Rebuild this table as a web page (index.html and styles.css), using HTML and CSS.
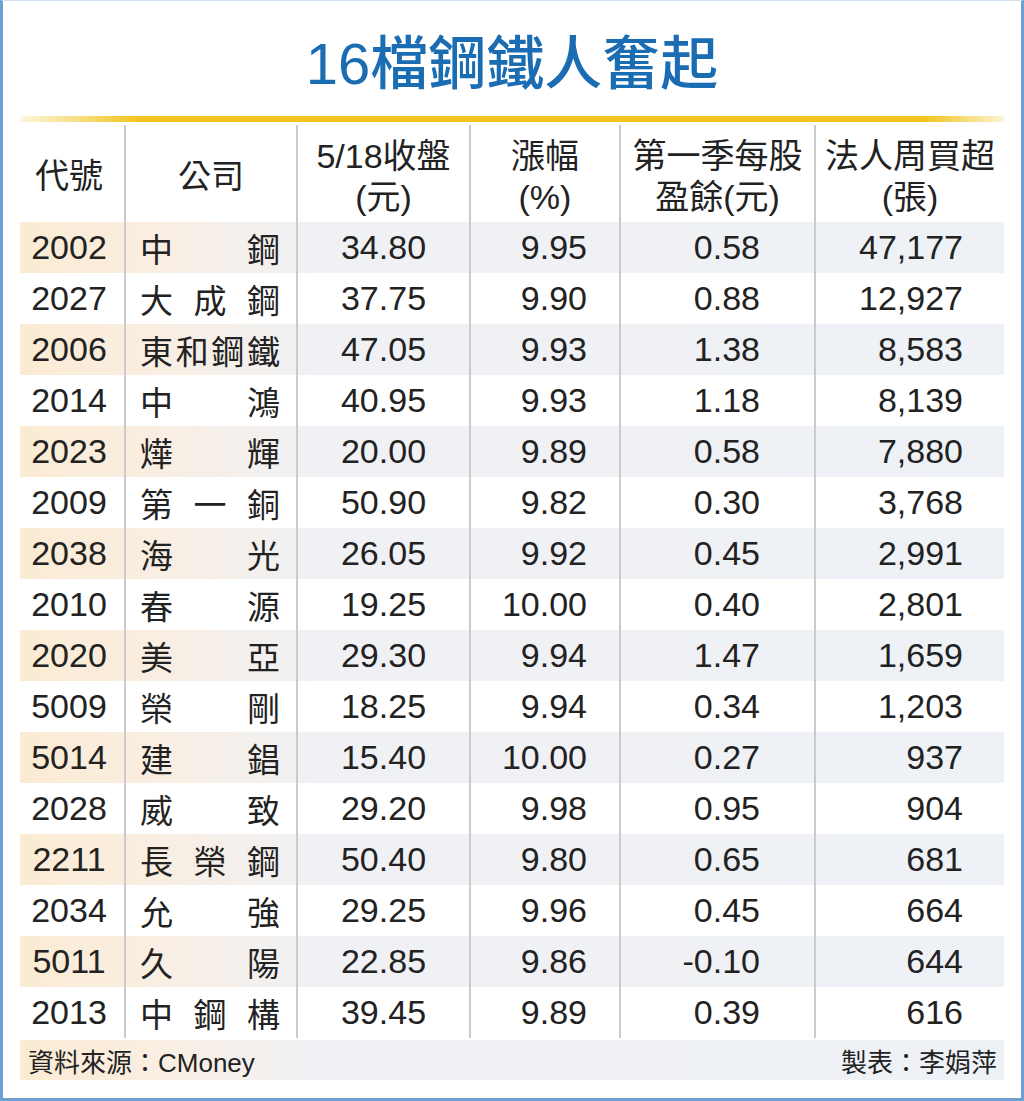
FILE: index.html
```html
<!DOCTYPE html>
<html lang="zh-Hant">
<head>
<meta charset="utf-8">
<title>16檔鋼鐵人奮起</title>
<link rel="stylesheet" href="styles.css">
</head>
<body>
<div class="frame">
  <h1 class="title">16檔鋼鐵人奮起</h1>
  <div class="rule"></div>
  <div class="table">
    <div class="row head">
      <div class="c c1">代號</div>
      <div class="c c2">公司</div>
      <div class="c c3">5/18收盤<br>(元)</div>
      <div class="c c4">漲幅<br>(%)</div>
      <div class="c c5">第一季每股<br>盈餘(元)</div>
      <div class="c c6">法人周買超<br>(張)</div>
    </div>
    <div class="row alt"><div class="c c1">2002</div><div class="c c2"><span>中</span><span>鋼</span></div><div class="c c3">34.80</div><div class="c c4">9.95</div><div class="c c5">0.58</div><div class="c c6">47,177</div></div>
    <div class="row"><div class="c c1">2027</div><div class="c c2"><span>大</span><span>成</span><span>鋼</span></div><div class="c c3">37.75</div><div class="c c4">9.90</div><div class="c c5">0.88</div><div class="c c6">12,927</div></div>
    <div class="row alt"><div class="c c1">2006</div><div class="c c2"><span>東</span><span>和</span><span>鋼</span><span>鐵</span></div><div class="c c3">47.05</div><div class="c c4">9.93</div><div class="c c5">1.38</div><div class="c c6">8,583</div></div>
    <div class="row"><div class="c c1">2014</div><div class="c c2"><span>中</span><span>鴻</span></div><div class="c c3">40.95</div><div class="c c4">9.93</div><div class="c c5">1.18</div><div class="c c6">8,139</div></div>
    <div class="row alt"><div class="c c1">2023</div><div class="c c2"><span>燁</span><span>輝</span></div><div class="c c3">20.00</div><div class="c c4">9.89</div><div class="c c5">0.58</div><div class="c c6">7,880</div></div>
    <div class="row"><div class="c c1">2009</div><div class="c c2"><span>第</span><span>一</span><span>銅</span></div><div class="c c3">50.90</div><div class="c c4">9.82</div><div class="c c5">0.30</div><div class="c c6">3,768</div></div>
    <div class="row alt"><div class="c c1">2038</div><div class="c c2"><span>海</span><span>光</span></div><div class="c c3">26.05</div><div class="c c4">9.92</div><div class="c c5">0.45</div><div class="c c6">2,991</div></div>
    <div class="row"><div class="c c1">2010</div><div class="c c2"><span>春</span><span>源</span></div><div class="c c3">19.25</div><div class="c c4">10.00</div><div class="c c5">0.40</div><div class="c c6">2,801</div></div>
    <div class="row alt"><div class="c c1">2020</div><div class="c c2"><span>美</span><span>亞</span></div><div class="c c3">29.30</div><div class="c c4">9.94</div><div class="c c5">1.47</div><div class="c c6">1,659</div></div>
    <div class="row"><div class="c c1">5009</div><div class="c c2"><span>榮</span><span>剛</span></div><div class="c c3">18.25</div><div class="c c4">9.94</div><div class="c c5">0.34</div><div class="c c6">1,203</div></div>
    <div class="row alt"><div class="c c1">5014</div><div class="c c2"><span>建</span><span>錩</span></div><div class="c c3">15.40</div><div class="c c4">10.00</div><div class="c c5">0.27</div><div class="c c6">937</div></div>
    <div class="row"><div class="c c1">2028</div><div class="c c2"><span>威</span><span>致</span></div><div class="c c3">29.20</div><div class="c c4">9.98</div><div class="c c5">0.95</div><div class="c c6">904</div></div>
    <div class="row alt"><div class="c c1">2211</div><div class="c c2"><span>長</span><span>榮</span><span>鋼</span></div><div class="c c3">50.40</div><div class="c c4">9.80</div><div class="c c5">0.65</div><div class="c c6">681</div></div>
    <div class="row"><div class="c c1">2034</div><div class="c c2"><span>允</span><span>強</span></div><div class="c c3">29.25</div><div class="c c4">9.96</div><div class="c c5">0.45</div><div class="c c6">664</div></div>
    <div class="row alt"><div class="c c1">5011</div><div class="c c2"><span>久</span><span>陽</span></div><div class="c c3">22.85</div><div class="c c4">9.86</div><div class="c c5">-0.10</div><div class="c c6">644</div></div>
    <div class="row"><div class="c c1">2013</div><div class="c c2"><span>中</span><span>鋼</span><span>構</span></div><div class="c c3">39.45</div><div class="c c4">9.89</div><div class="c c5">0.39</div><div class="c c6">616</div></div>
  </div>
  <div class="foot">
    <span>資料來源：CMoney</span>
    <span>製表：李娟萍</span>
  </div>
</div>
</body>
</html>
```
FILE: styles.css
```css
html, body {
  margin: 0;
  padding: 0;
  background: #ffffff;
}

.frame {
  width: 1024px;
  height: 1101px;
  box-sizing: border-box;
  border-left: 3px solid #6f9fd3;
  border-right: 3px solid #6f9fd3;
  border-bottom: 3px solid #6f9fd3;
  border-top: 1px solid #d3e2f2;
  padding: 0 17px;
  font-family: "Liberation Sans", "Noto Sans CJK TC", sans-serif;
  color: #222222;
  background: #ffffff;
}

.title {
  margin: 34px 0 0;
  font-size: 58px;
  line-height: 58px;
  font-weight: 500;
  color: #1a6cb3;
  text-align: center;
  letter-spacing: 0;
}

.rule {
  margin-top: 23px;
  height: 6px;
  border-radius: 3px;
  background: linear-gradient(90deg, rgba(240, 196, 30, 0.15) 0, #f1c521 12%, #f1c521 92%, rgba(240, 196, 30, 0.2) 100%);
}

.table {
  margin-top: 3px;
}

.row {
  display: grid;
  grid-template-columns: 104px 172px 173px 150px 195px 190px;
  height: 51px;
  font-size: 34px;
}

.row.alt {
  background: linear-gradient(90deg, #fbebd3 0, #f9eee2 140px, #f0f1f4 290px, #eef1f6 100%);
}

.row.head {
  height: 97px;
  font-size: 34px;
  font-weight: 400;
  line-height: 41px;
}

.c {
  display: flex;
  align-items: center;
  box-sizing: border-box;
  white-space: nowrap;
}

.c + .c {
  border-left: 2px solid #cbcbcb;
}

.c1 {
  justify-content: center;
  padding-right: 6px;
}

.c2 {
  justify-content: space-between;
  padding: 0 16px 0 14px;
  font-size: 33px;
}

.c3 {
  justify-content: center;
}

.c4 {
  justify-content: flex-end;
  padding-right: 32px;
}

.c5 {
  justify-content: flex-end;
  padding-right: 54px;
}

.c6 {
  justify-content: flex-end;
  padding-right: 41px;
}

.head .c {
  justify-content: center;
  text-align: center;
  padding: 6px 0 0;
}

.head .c1 {
  padding-right: 6px;
}

.foot {
  margin-top: 2px;
  height: 40px;
  display: flex;
  align-items: center;
  justify-content: space-between;
  padding: 0 7px 0 8px;
  font-size: 26px;
  background: linear-gradient(90deg, #fbebd3 0, #f9eee2 140px, #f0f1f4 290px, #eef1f6 100%);
}
```
